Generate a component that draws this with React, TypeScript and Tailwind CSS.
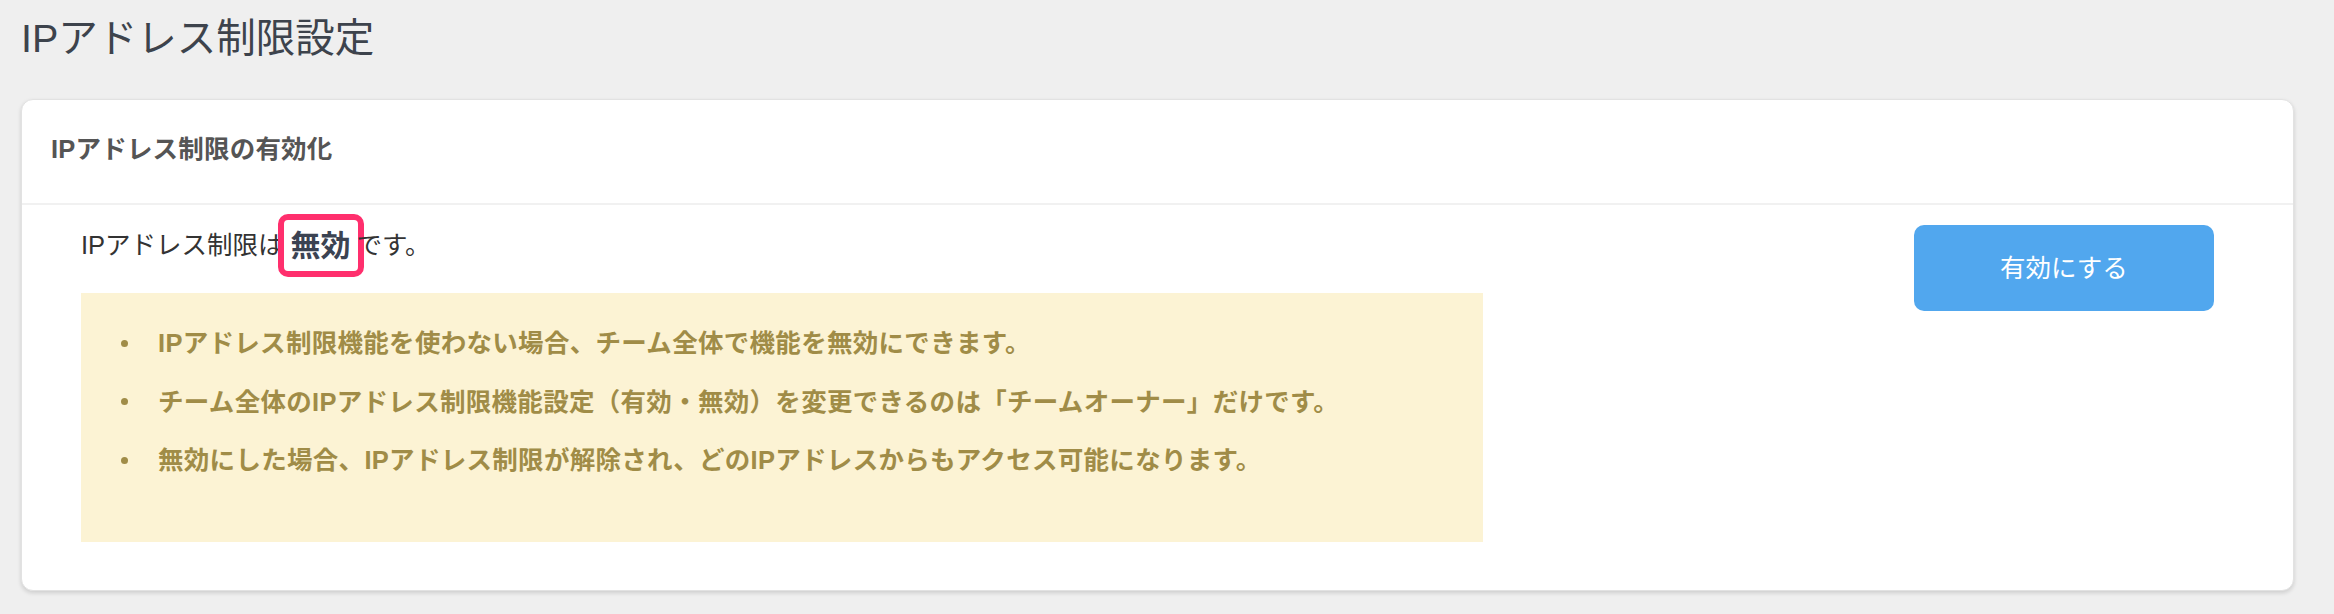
import React from "react";

const FONT = { fontFamily: '"Liberation Sans", "Noto Sans CJK JP", sans-serif' };

const notes = [
  "IPアドレス制限機能を使わない場合、チーム全体で機能を無効にできます。",
  "チーム全体のIPアドレス制限機能設定（有効・無効）を変更できるのは「チームオーナー」だけです。",
  "無効にした場合、IPアドレス制限が解除され、どのIPアドレスからもアクセス可能になります。",
];

export default function App() {
  return (
    <div className="min-h-[614px] bg-[#efefef] pl-[21px] pr-[40px]" style={FONT}>
      <div className="pt-[14px] text-[39.5px] leading-[48px] text-[#3d434c]">IPアドレス制限設定</div>
      <div className="mt-[37px] rounded-[12px] border border-[#e2e2e2] bg-white shadow-[0_2px_4px_rgba(0,0,0,0.14)]">
        <div className="flex h-[105px] items-center border-b-2 border-[#f1f1f1] pl-[29px] pb-[4px] text-[25.5px] font-bold tracking-[0.2px] text-[#555555]">
          IPアドレス制限の有効化
        </div>
        <div className="flex items-start justify-between pl-[59px] pr-[79px] pt-[9px] pb-[48px]">
          <div className="w-[1402px]">
            <div className="flex h-[63px] items-center text-[25.5px] text-[#333333]">
              <span>IPアドレス制限は</span>
              <span className="-ml-[6px] -mr-[7px] flex h-[63px] w-[86px] shrink-0 items-center justify-center rounded-[10px] border-[6px] border-[#ff2f6d] text-[30px] font-bold text-[#3b4352]">
                無効
              </span>
              <span>です。</span>
            </div>
            <div className="mt-[16px] h-[249px] bg-[#fcf3d4] pt-[31px]">
              <ul className="flex flex-col gap-[20px]">
                {notes.map((n) => (
                  <li key={n} className="flex items-center text-[25.5px] font-bold leading-[38.5px] tracking-[0.3px] text-[#a08c47]">
                    <span className="ml-[40px] mr-[30px] inline-block h-[7px] w-[7px] shrink-0 rounded-full bg-[#a08c47]" />
                    <span>{n}</span>
                  </li>
                ))}
              </ul>
            </div>
          </div>
          <button className="mt-[11px] flex h-[86px] w-[300px] items-center justify-center rounded-[10px] bg-[#51a7ee] text-[25.5px] text-white">
            有効にする
          </button>
        </div>
      </div>
    </div>
  );
}
